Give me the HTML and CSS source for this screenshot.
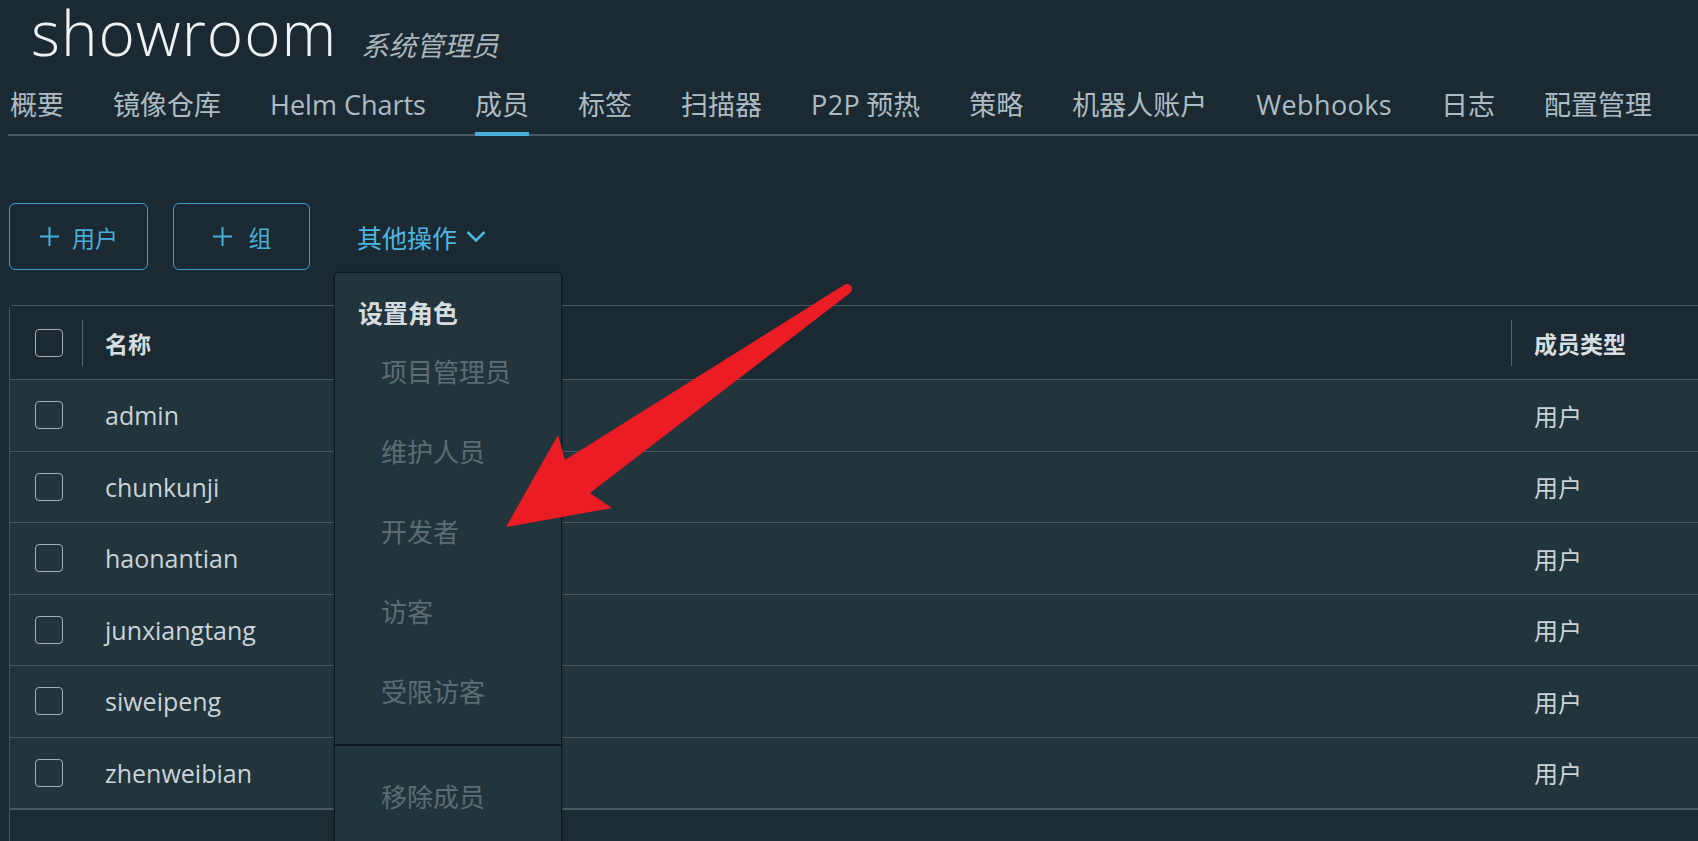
FILE: index.html
```html
<!DOCTYPE html>
<html lang="zh-CN">
<head>
<meta charset="utf-8">
<title>showroom - 成员</title>
<link rel="stylesheet" href="styles.css">
</head>
<body>
<div class="page">
  <header class="title-bar">
    <h1 class="title">showroom</h1>
    <span class="role">系统管理员</span>
  </header>

  <nav class="tabs">
    <a class="tab">概要</a>
    <a class="tab">镜像仓库</a>
    <a class="tab"><span class="latin tight">Helm Charts</span></a>
    <a class="tab active">成员</a>
    <a class="tab">标签</a>
    <a class="tab">扫描器</a>
    <a class="tab"><span class="latin">P2P</span> 预热</a>
    <a class="tab">策略</a>
    <a class="tab">机器人账户</a>
    <a class="tab"><span class="latin">Webhooks</span></a>
    <a class="tab">日志</a>
    <a class="tab">配置管理</a>
  </nav>

  <div class="toolbar">
    <button class="btn btn-user">
      <svg class="plus" viewBox="0 0 21 21"><path d="M10.5 1V20M1 10.5H20"/></svg>
      <span>用户</span>
    </button>
    <button class="btn btn-group">
      <svg class="plus" viewBox="0 0 21 21"><path d="M10.5 1V20M1 10.5H20"/></svg>
      <span>组</span>
    </button>
    <button class="link-btn">
      <span>其他操作</span>
      <svg class="chevron" viewBox="0 0 22 13"><path d="M2.5 2L11 10.5L19.5 2"/></svg>
    </button>
  </div>

  <div class="grid">
    <div class="row head">
      <div class="cell check"><span class="box"></span></div>
      <div class="cell hcell">名称</div>
      <div class="cell hcell">成员类型</div>
    </div>
    <div class="row">
      <div class="cell check"><span class="box"></span></div>
      <div class="cell name">admin</div>
      <div class="cell type">用户</div>
    </div>
    <div class="row">
      <div class="cell check"><span class="box"></span></div>
      <div class="cell name">chunkunji</div>
      <div class="cell type">用户</div>
    </div>
    <div class="row">
      <div class="cell check"><span class="box"></span></div>
      <div class="cell name">haonantian</div>
      <div class="cell type">用户</div>
    </div>
    <div class="row">
      <div class="cell check"><span class="box"></span></div>
      <div class="cell name">junxiangtang</div>
      <div class="cell type">用户</div>
    </div>
    <div class="row">
      <div class="cell check"><span class="box"></span></div>
      <div class="cell name">siweipeng</div>
      <div class="cell type">用户</div>
    </div>
    <div class="row">
      <div class="cell check"><span class="box"></span></div>
      <div class="cell name">zhenweibian</div>
      <div class="cell type">用户</div>
    </div>
    <div class="grid-footer"></div>
  </div>

  <div class="dropdown">
    <div class="dd-header">设置角色</div>
    <div class="dd-item">项目管理员</div>
    <div class="dd-item">维护人员</div>
    <div class="dd-item">开发者</div>
    <div class="dd-item">访客</div>
    <div class="dd-item">受限访客</div>
    <div class="dd-sep"></div>
    <div class="dd-item">移除成员</div>
  </div>

  <svg class="arrow" viewBox="0 0 1698 841">
    <path d="M844 285L565 460L558 435L506 527L612 508L590 493L850 293A5 5 0 0 0 844 285Z"/>
  </svg>
</div>
</body>
</html>
```

FILE: styles.css
```css
html, body {
  margin: 0;
  padding: 0;
}

body {
  background: #1b2a32;
  font-family: "Open Sans", "Noto Sans CJK SC", sans-serif;
  color: #c9d3d8;
  overflow: hidden;
}

.page {
  position: relative;
  height: 841px;
  overflow: hidden;
}

/* Title */
.title-bar {
  display: flex;
  align-items: baseline;
  padding-left: 31px;
  height: 64px;
}

.title {
  margin: 0;
  font-family: "Open Sans", sans-serif;
  font-weight: 300;
  font-size: 62px;
  letter-spacing: 1px;
  line-height: 64px;
  color: #eef2f4;
}

.role {
  margin-left: 24px;
  font-family: "Noto Sans CJK SC", sans-serif;
  font-style: italic;
  font-size: 27.5px;
  color: #aab6bd;
}

/* Tabs */
.tabs {
  display: flex;
  gap: 49px;
  margin: 6px 0 0 8px;
  padding-left: 2px;
  border-bottom: 2px solid #4a5a63;
}

.tab {
  font-family: "Noto Sans CJK SC", sans-serif;
  font-size: 27px;
  line-height: 36px;
  padding: 16px 0 9px;
  border-bottom: 4px solid transparent;
  margin-bottom: -2px;
  color: #adbbc4;
  white-space: nowrap;
}

.latin {
  font-family: "Open Sans", sans-serif;
  font-size: 27px;
  letter-spacing: 0.4px;
}

.latin.tight {
  letter-spacing: 0;
}

.tab.active {
  border-bottom-color: #49afd9;
}

/* Toolbar */
.toolbar {
  display: flex;
  align-items: center;
  gap: 25px;
  margin: 67px 0 0 9px;
}

.btn {
  box-sizing: border-box;
  height: 67px;
  display: flex;
  align-items: center;
  justify-content: center;
  gap: 12px;
  border: 1.5px solid #3f9fc8;
  border-radius: 6px;
  background: transparent;
  color: #49afd9;
  font-family: "Noto Sans CJK SC", sans-serif;
  font-size: 23px;
  padding: 0;
}

.btn-user {
  width: 139px;
}

.btn-group {
  width: 137px;
  gap: 16px;
}

.plus {
  width: 21px;
  height: 21px;
  fill: none;
  stroke: #49afd9;
  stroke-width: 2;
}

.link-btn {
  margin-left: 22px;
  display: flex;
  align-items: center;
  gap: 8px;
  border: none;
  background: transparent;
  padding: 0;
  color: #4fb6e2;
  font-family: "Noto Sans CJK SC", sans-serif;
  font-size: 25px;
}

.chevron {
  width: 22px;
  height: 13px;
  fill: none;
  stroke: #4fb6e2;
  stroke-width: 2.6;
}

/* Grid */
.grid {
  margin: 35px 0 0 9px;
  width: 1709px;
  border: 1px solid #485963;
  border-right: none;
  border-bottom: none;
  border-radius: 4px 0 0 0;
}

.row {
  display: grid;
  grid-template-columns: 72px 1fr 208px;
  height: 70.5px;
  background: #22343c;
  border-bottom: 1px solid #485963;
}

.row.head {
  height: 73px;
  background: #1b2a32;
}

.cell {
  display: flex;
  align-items: center;
  min-width: 0;
}

.check {
  padding-left: 25px;
}

.box {
  box-sizing: border-box;
  width: 28px;
  height: 28px;
  border: 1.5px solid #a3afb5;
  border-radius: 4px;
}

.hcell {
  align-self: center;
  height: 46px;
  border-left: 1.5px solid #56666e;
  padding-left: 22px;
  font-family: "Noto Sans CJK SC", sans-serif;
  font-weight: 700;
  font-size: 23px;
  color: #d7dee2;
}

.name {
  padding-left: 23px;
  font-size: 25px;
  color: #c9d3d8;
}

.type {
  padding-left: 23px;
  font-family: "Noto Sans CJK SC", sans-serif;
  font-size: 24px;
  color: #c9d3d8;
}

.grid-footer {
  height: 40px;
  background: #1d2b32;
  border-top: 1px solid #485963;
}

/* Dropdown overlay */
.dropdown {
  position: absolute;
  left: 334px;
  top: 272px;
  width: 228px;
  height: 600px;
  box-sizing: border-box;
  background: #22343c;
  border: 1.5px solid #0d171c;
  border-radius: 4px;
  padding-top: 19px;
  box-shadow: 0 1px 3px rgba(0, 0, 0, 0.45);
  font-family: "Noto Sans CJK SC", sans-serif;
}

.dd-header {
  height: 40px;
  line-height: 40px;
  padding-left: 23px;
  font-weight: 700;
  font-size: 25px;
  color: #d6dde1;
}

.dd-item {
  height: 80px;
  line-height: 78px;
  padding-left: 46px;
  font-size: 26px;
  color: #5d6c74;
}

.dd-sep {
  height: 2px;
  margin: 12px 0 11px;
  background: #0f191e;
}

/* Annotation arrow */
.arrow {
  position: absolute;
  left: 0;
  top: 0;
  width: 1698px;
  height: 841px;
  pointer-events: none;
  fill: #ec1c24;
}
```
